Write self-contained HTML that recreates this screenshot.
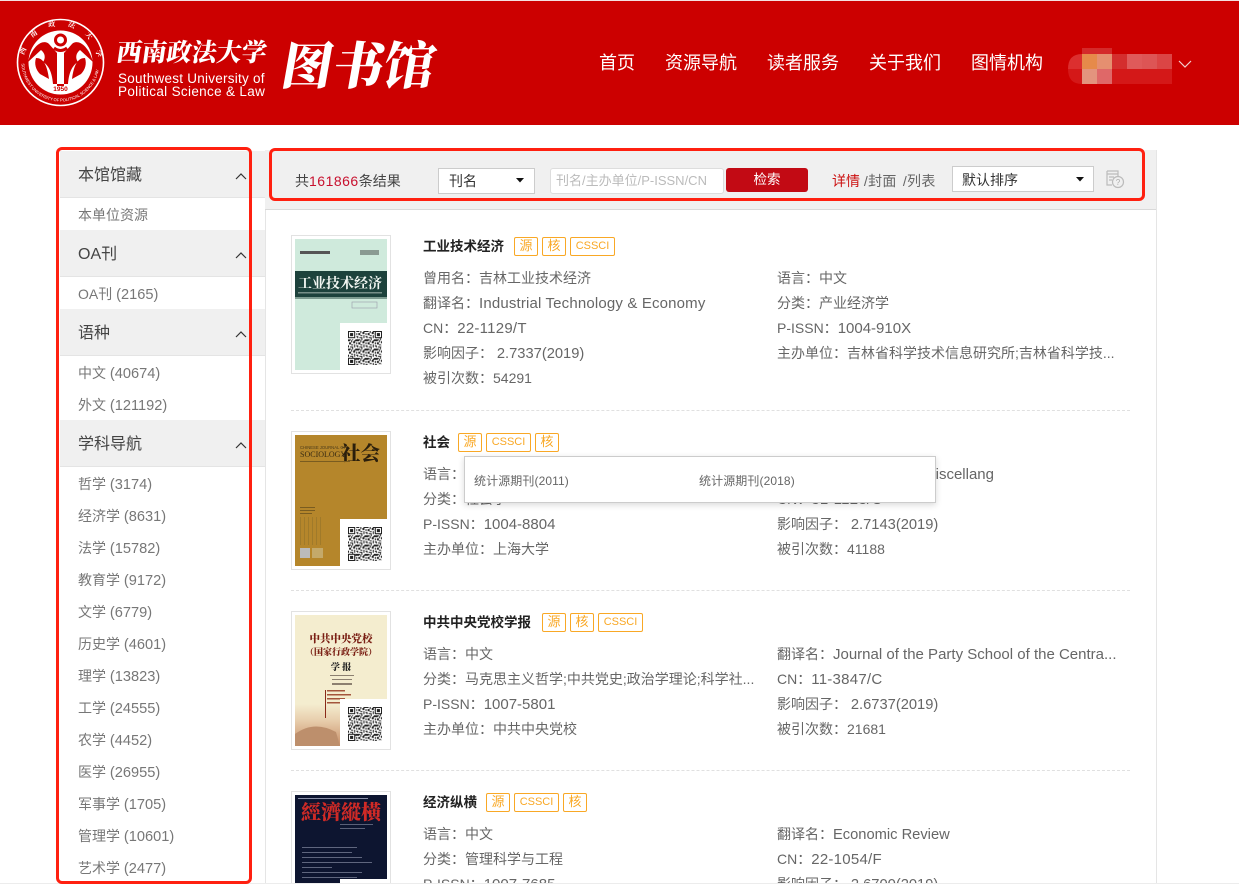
<!DOCTYPE html>
<html lang="zh-CN">
<head>
<meta charset="utf-8">
<title>图书馆</title>
<style>
html,body{margin:0;padding:0;background:#fff;width:1239px;height:885px;overflow:hidden}
#w{position:relative;width:1239px;height:885px;overflow:hidden;font-family:"Liberation Sans","Noto Sans CJK SC",sans-serif;color:#666;font-size:14px}
.t{position:absolute;height:24px;line-height:24px;white-space:nowrap}
.hd{position:absolute;left:0;top:0;width:1239px;height:125px;background:#cc0000;border-top:1px solid #f4e0e0;box-sizing:border-box}
.nav{position:absolute;top:51px;height:24px;line-height:24px;color:#fff;font-size:18px;white-space:nowrap}
.sh{position:absolute;left:60px;width:205px;height:46px;background:#f0f0f0;border-bottom:1px solid #e4e4e4}
.sh span{position:absolute;left:18px;top:13px;font-size:16px;line-height:24px;color:#444}
.sh svg{position:absolute;left:175px;top:21px}
.si{left:78px;color:#777}
.n{font-size:14.6px}
.bt{position:absolute;height:17px;line-height:16px;border:1px solid #f9a825;border-radius:2px;color:#f9a825;font-size:13px;text-align:center}
.bt.c{font-size:11px}
.ti{color:#222;font-weight:bold;font-size:13.5px;left:423px}
.l{left:423px}.r{left:777px}
.a{font-size:15px;letter-spacing:.16px}.b{font-size:15px}.d{font-size:15px;letter-spacing:.25px}.f{font-size:15px}.g{font-size:14.7px}
.cut{height:11px;overflow:hidden}
.cv{position:absolute;left:291px;width:98px;height:137px;border:1px solid #e2e2e2;background:#fff;overflow:hidden}
.cv svg{display:block;filter:blur(.3px)}
.dash{position:absolute;left:291px;width:839px;border-top:1px dashed #e0e0e0}
.box{position:absolute;border:3px solid #ff2010;border-radius:6px;box-sizing:border-box;pointer-events:none}
</style>
</head>
<body>
<div id="w">
<svg width="0" height="0" style="position:absolute">
<defs>
<pattern id="qp" width="9" height="9" patternUnits="userSpaceOnUse">
<rect width="9" height="9" fill="#fff"/>
<path d="M0 0h2v1H0zM3 0h1v2H3zM6 0h3v1H6zM1 2h2v2H1zM5 1h2v2H5zM8 2h1v2H8zM0 5h1v2H0zM3 4h2v1H3zM6 4h1v3H6zM2 6h3v1H2zM8 5h1v1H8zM0 8h3v1H0zM4 7h1v2H4zM7 8h2v1H7z" fill="#222"/>
</pattern>
<symbol id="qr" viewBox="0 0 33 33">
<rect width="33" height="33" fill="url(#qp)"/>
<rect width="8" height="8" fill="#fff"/><rect x=".5" y=".5" width="6" height="6" fill="none" stroke="#222"/><rect x="2" y="2" width="3" height="3" fill="#222"/>
<rect x="26" y="0" width="7" height="7" fill="#222"/><rect x="27" y="1" width="5" height="5" fill="#fff"/><rect x="28" y="2" width="3" height="3" fill="#222"/>
<rect x="0" y="26" width="7" height="7" fill="#222"/><rect x="1" y="27" width="5" height="5" fill="#fff"/><rect x="2" y="28" width="3" height="3" fill="#222"/>
</symbol>
</defs>
</svg>

<div class="hd"></div>
<!-- emblem -->
<svg style="position:absolute;left:16px;top:18px" width="90" height="90" viewBox="0 0 90 90">
<circle cx="44.5" cy="44.5" r="43" fill="none" stroke="#fff" stroke-width="1.6"/>
<circle cx="44.5" cy="44.5" r="32" fill="#fff"/>
<path d="M12 44 C17 26 28 21 33 26 L41 35 L41 68 H48 L48 35 L56 26 C61 21 72 26 77 44 L64 32 C60 35 59 40 62 44 C57 47 53 53 52 66 H37 C36 53 32 47 27 44 C30 40 29 35 25 32Z" fill="#cc0000"/>
<path d="M20 40 C27 40 31 46 33 61 L24 56 C20 52 18 46 20 40ZM69 40 C62 40 58 46 56 61 L65 56 C69 52 71 46 69 40Z" fill="#cc0000"/>
<circle cx="44.5" cy="22" r="5" fill="none" stroke="#cc0000" stroke-width="3"/>
<path d="M38 30 Q44.5 35 51 30" fill="none" stroke="#cc0000" stroke-width="3"/>
<text x="44.5" y="73" text-anchor="middle" font-size="6.5" font-weight="bold" fill="#cc0000" font-family="Liberation Sans">1950</text>
<path id="arcT" d="M8 44.5 A36.5 36.5 0 0 1 81 44.5" fill="none"/>
<text font-size="7" fill="#fff" font-weight="bold" font-family="Noto Serif CJK SC" letter-spacing="12"><textPath href="#arcT" startOffset="7">西南政法大学</textPath></text>
<path id="arcB" d="M5.5 44.5 A39 39 0 0 0 83.5 44.5" fill="none"/>
<text font-size="4.1" fill="#fff" font-family="Liberation Sans"><textPath href="#arcB" startOffset="1">SOUTHWEST UNIVERSITY OF POLITICAL SCIENCE &amp; LAW</textPath></text>
</svg>
<div class="t" style="left:117px;top:37px;height:28px;line-height:28px;font-family:'Noto Serif CJK SC','Liberation Serif',serif;font-weight:900;font-size:25px;color:#fff;transform:skewX(-8deg)">西南政法大学</div>
<div class="t" style="left:118px;top:72px;height:13px;line-height:13px;font-size:13.5px;letter-spacing:.25px;color:#fff">Southwest University of</div>
<div class="t" style="left:118px;top:85px;height:13px;line-height:13px;font-size:13.5px;letter-spacing:.33px;color:#fff">Political Science &amp; Law</div>
<div class="t" style="left:283px;top:34px;height:56px;line-height:56px;font-family:'Noto Serif CJK SC','Liberation Serif',serif;font-weight:900;font-size:51px;color:#fff;transform:skewX(-10deg)">图书馆</div>

<div class="nav" style="left:599px">首页</div>
<div class="nav" style="left:665px">资源导航</div>
<div class="nav" style="left:767px">读者服务</div>
<div class="nav" style="left:869px">关于我们</div>
<div class="nav" style="left:971px">图情机构</div>
<!-- pixelated avatar/name -->
<svg style="position:absolute;left:1068px;top:48px" width="125" height="38" viewBox="0 0 125 38">
<path d="M0 21 Q0 6 14 6 V21Z" fill="#dc2f2f"/>
<path d="M0 21 Q0 36 14 36 V21Z" fill="#d41818"/>
<rect x="14" y="6" width="15" height="15" fill="#e68a4a"/>
<rect x="29" y="6" width="15" height="15" fill="#e58f70"/>
<rect x="14" y="21" width="15" height="15" fill="#e3947e"/>
<rect x="29" y="21" width="15" height="15" fill="#df6868"/>
<rect x="14" y="0" width="30" height="6" fill="#d42a2a"/>
<rect x="44" y="6" width="15" height="15" fill="#d42e2e"/>
<rect x="59" y="6" width="15" height="15" fill="#df5a5a"/>
<rect x="74" y="6" width="15" height="15" fill="#dd5555"/>
<rect x="89" y="6" width="15" height="15" fill="#db4545"/>
<rect x="44" y="21" width="60" height="15" fill="#d41818"/>
<path d="M111 13 L117 19 L123 13" fill="none" stroke="#f3d0d0" stroke-width="1.2"/>
</svg>

<!-- sidebar -->
<div style="position:absolute;left:265px;top:150px;height:735px;border-left:1px solid #e5e5e5"></div>
<div class="sh" style="top:151px"><span>本馆馆藏</span><svg width="12" height="8"><path d="M1 7 L6 2 L11 7" fill="none" stroke="#333" stroke-width="1.2"/></svg></div>
<div class="t si" style="top:203px">本单位资源</div>
<div class="sh" style="top:230px"><span>OA刊</span><svg width="12" height="8"><path d="M1 7 L6 2 L11 7" fill="none" stroke="#333" stroke-width="1.2"/></svg></div>
<div class="t si" style="top:282px">OA刊 <span class="n">(2165)</span></div>
<div class="sh" style="top:309px"><span>语种</span><svg width="12" height="8"><path d="M1 7 L6 2 L11 7" fill="none" stroke="#333" stroke-width="1.2"/></svg></div>
<div class="t si" style="top:361px">中文 <span class="n">(40674)</span></div>
<div class="t si" style="top:393px">外文 <span class="n">(121192)</span></div>
<div class="sh" style="top:420px"><span>学科导航</span><svg width="12" height="8"><path d="M1 7 L6 2 L11 7" fill="none" stroke="#333" stroke-width="1.2"/></svg></div>
<div class="t si" style="top:472px">哲学 <span class="n">(3174)</span></div>
<div class="t si" style="top:504px">经济学 <span class="n">(8631)</span></div>
<div class="t si" style="top:536px">法学 <span class="n">(15782)</span></div>
<div class="t si" style="top:568px">教育学 <span class="n">(9172)</span></div>
<div class="t si" style="top:600px">文学 <span class="n">(6779)</span></div>
<div class="t si" style="top:632px">历史学 <span class="n">(4601)</span></div>
<div class="t si" style="top:664px">理学 <span class="n">(13823)</span></div>
<div class="t si" style="top:696px">工学 <span class="n">(24555)</span></div>
<div class="t si" style="top:728px">农学 <span class="n">(4452)</span></div>
<div class="t si" style="top:760px">医学 <span class="n">(26955)</span></div>
<div class="t si" style="top:792px">军事学 <span class="n">(1705)</span></div>
<div class="t si" style="top:824px">管理学 <span class="n">(10601)</span></div>
<div class="t si" style="top:856px">艺术学 <span class="n">(2477)</span></div>

<!-- main panel -->
<div style="position:absolute;left:265px;top:150px;width:892px;height:60px;background:#f0f0f0;border-bottom:1px solid #d9d9d9;box-sizing:border-box"></div>
<div style="position:absolute;left:1156px;top:150px;height:735px;border-left:1px solid #e5e5e5"></div>

<div class="t" style="left:295px;top:169px;font-size:14px;color:#444">共<span style="color:#c8102e;letter-spacing:.5px">161866</span>条结果</div>
<div style="position:absolute;left:438px;top:168px;width:97px;height:26px;background:#fff;border:1px solid #ccc;box-sizing:border-box"></div>
<div class="t" style="left:449px;top:169px;color:#333;font-size:14px">刊名</div>
<svg style="position:absolute;left:516px;top:178px" width="9" height="6"><path d="M0 0H8L4 4.5Z" fill="#111"/></svg>
<div style="position:absolute;left:550px;top:168px;width:174px;height:26px;background:#fff;border:1px solid #ddd;border-radius:3px;box-sizing:border-box"></div>
<div class="t" style="left:556px;top:169px;font-size:13px;color:#bbb">刊名/主办单位/P-ISSN/CN</div>
<div style="position:absolute;left:726px;top:168px;width:82px;height:24px;line-height:24px;background:#c20a14;border-radius:3px;color:#fff;font-size:13.5px;text-align:center">检索</div>
<div class="t" style="left:832px;top:169px;font-size:14px"><span style="color:#cc1111">详情</span> <span style="color:#666;letter-spacing:.3px;word-spacing:2px">/封面 /列表</span></div>
<div style="position:absolute;left:952px;top:166px;width:142px;height:26px;background:#fff;border:1px solid #ccc;box-sizing:border-box"></div>
<div class="t" style="left:962px;top:168px;font-size:14px;color:#333">默认排序</div>
<svg style="position:absolute;left:1076px;top:177px" width="9" height="6"><path d="M0 0H8L4 4.5Z" fill="#111"/></svg>
<svg style="position:absolute;left:1105px;top:169px" width="21" height="20" viewBox="0 0 21 20">
<path d="M2 2H13V7M2 2V16H7" fill="none" stroke="#bbb" stroke-width="1.2"/><path d="M2 5H13M4 8H9M4 11H7" stroke="#bbb" stroke-width="1.2"/>
<circle cx="13" cy="13" r="5.5" fill="#f0f0f0" stroke="#bbb" stroke-width="1.2"/>
<text x="13" y="16" text-anchor="middle" font-size="8" fill="#aaa" font-family="Liberation Sans">?</text>
</svg>

<!-- Item 1 -->
<div class="cv" style="top:235px">
<svg width="98" height="137" viewBox="0 0 98 137">
<rect x="3" y="3" width="92" height="131" fill="#cfeadc"/>
<rect x="3" y="35" width="92" height="26" fill="#1d423c"/>
<rect x="3" y="61" width="92" height="2" fill="#7d9b90"/>
<rect x="8" y="15" width="30" height="3" fill="#555"/><rect x="68" y="14" width="19" height="5" fill="#8a9a92"/>
<text x="6" y="52" font-size="14" font-weight="bold" fill="#f2f6f2" font-family="Noto Serif CJK SC">工业技术经济</text>
<rect x="6" y="56" width="84" height="1.5" fill="#778f88"/>
<rect x="60" y="66" width="25" height="6" fill="none" stroke="#99a" stroke-width=".6"/>
<rect x="48" y="87" width="47" height="47" fill="#fff"/>
<use href="#qr" x="56" y="95" width="34" height="34"/>
</svg>
</div>
<div class="t ti" style="top:235px">工业技术经济</div>
<div class="bt" style="left:514px;top:237px;width:22px">源</div>
<div class="bt" style="left:542px;top:237px;width:22px">核</div>
<div class="bt c" style="left:570px;top:237px;width:43px">CSSCI</div>
<div class="t l" style="top:266px">曾用名：吉林工业技术经济</div>
<div class="t l" style="top:291px">翻译名：<span class="a">Industrial Technology &amp; Economy</span></div>
<div class="t l" style="top:316px">CN：<span class="d">22-1129/T</span></div>
<div class="t l" style="top:341px">影响因子： <span class="g">2.7337(2019)</span></div>
<div class="t l" style="top:366px">被引次数：54291</div>
<div class="t r" style="top:266px">语言：中文</div>
<div class="t r" style="top:291px">分类：产业经济学</div>
<div class="t r" style="top:316px">P-ISSN：<span class="f">1004-910X</span></div>
<div class="t r" style="top:341px">主办单位：吉林省科学技术信息研究所;吉林省科学技...</div>
<div class="dash" style="top:410px"></div>

<!-- Item 2 -->
<div class="cv" style="top:431px">
<svg width="98" height="137" viewBox="0 0 98 137">
<rect x="3" y="3" width="92" height="131" fill="#b5862b"/>
<text x="8" y="17" font-size="4.2" fill="#4a3a1a" font-family="Liberation Sans">CHINESE JOURNAL OF</text>
<text x="8" y="25" font-size="8" fill="#3a2c12" font-family="Liberation Serif">SOCIOLOGY</text>
<text x="49" y="28" font-size="19.5" font-weight="900" fill="#2b1f0c" font-family="Noto Serif CJK SC">社会</text>
<rect x="8" y="29" width="50" height="1" fill="#7a5c20"/>
<path d="M8 75h15v1H8zM8 78h15v1H8zM8 81h12v1H8z" fill="#7a5c20"/>
<path d="M8 85h1v28h-1zM12 85h1v28h-1zM16 85h1v28h-1zM20 85h1v28h-1zM24 85h1v28h-1zM28 85h1v28h-1z" fill="#a07a2a"/>
<rect x="8" y="116" width="10" height="10" fill="#bbb"/><rect x="20" y="116" width="11" height="10" fill="#c4a96a"/>
<rect x="48" y="87" width="47" height="47" fill="#fff"/>
<use href="#qr" x="56" y="95" width="34" height="34"/>
</svg>
</div>
<div class="t ti" style="top:431px">社会</div>
<div class="bt" style="left:458px;top:433px;width:22px">源</div>
<div class="bt c" style="left:486px;top:433px;width:43px">CSSCI</div>
<div class="bt" style="left:535px;top:433px;width:22px">核</div>
<div class="t l" style="top:462px">语言：中文</div>
<div class="t l" style="top:487px">分类：社会学</div>
<div class="t l" style="top:512px">P-ISSN：<span class="f">1004-8804</span></div>
<div class="t l" style="top:537px">主办单位：上海大学</div>
<div class="t" style="right:245px;top:462px">翻译名：<span class="b">Sociology Miscellang</span></div>
<div class="t r" style="top:487px">CN：<span class="d">31-1123/C</span></div>
<div class="t r" style="top:512px">影响因子： <span class="g">2.7143(2019)</span></div>
<div class="t r" style="top:537px">被引次数：41188</div>
<div style="position:absolute;left:464px;top:456px;width:472px;height:47px;background:#fff;border:1px solid #ccc;box-sizing:border-box;box-shadow:0 2px 6px rgba(0,0,0,.15)"></div>
<div class="t" style="left:474px;top:469px;font-size:12px;letter-spacing:.1px">统计源期刊(2011)</div>
<div class="t" style="left:699px;top:469px;font-size:12px;letter-spacing:.1px">统计源期刊(2018)</div>
<div class="dash" style="top:590px"></div>

<!-- Item 3 -->
<div class="cv" style="top:611px">
<svg width="98" height="137" viewBox="0 0 98 137">
<defs><linearGradient id="g3" x1="0" y1="0" x2="0" y2="1"><stop offset=".68" stop-color="#f4edcf"/><stop offset=".8" stop-color="#e8cfae"/><stop offset="1" stop-color="#c88f68"/></linearGradient></defs>
<rect x="3" y="3" width="92" height="131" fill="url(#g3)"/>
<text x="49" y="30" text-anchor="middle" font-size="10.5" font-weight="900" fill="#7a1f14" font-family="Noto Serif CJK SC">中共中央党校</text>
<text x="49" y="43" text-anchor="middle" font-size="9" font-weight="900" fill="#7a1f14" font-family="Noto Serif CJK SC">（国家行政学院）</text>
<text x="49" y="58" text-anchor="middle" font-size="9" font-weight="900" fill="#222" font-family="Noto Serif CJK SC">学 报</text>
<path d="M38 63h24v1H38zM40 67h20v1H40zM40 71h20v2H40z" fill="#8c8070"/>
<path d="M33 78h1v28h-1z" fill="#8a2a1a"/>
<path d="M35 78h18v1.5H35zM35 82h24v1.5H35zM35 86h18v1.5H35zM35 90h14v1.5H35z" fill="#a4553c"/>
<path d="M3 122 Q22 108 44 120 L48 134 H3Z" fill="#bd8f6c"/>
<rect x="48" y="87" width="47" height="47" fill="#fff"/>
<use href="#qr" x="56" y="95" width="34" height="34"/>
</svg>
</div>
<div class="t ti" style="top:611px">中共中央党校学报</div>
<div class="bt" style="left:542px;top:613px;width:22px">源</div>
<div class="bt" style="left:570px;top:613px;width:22px">核</div>
<div class="bt c" style="left:598px;top:613px;width:43px">CSSCI</div>
<div class="t l" style="top:642px">语言：中文</div>
<div class="t l" style="top:667px">分类：马克思主义哲学;中共党史;政治学理论;科学社...</div>
<div class="t l" style="top:692px">P-ISSN：<span class="f">1007-5801</span></div>
<div class="t l" style="top:717px">主办单位：中共中央党校</div>
<div class="t r" style="top:642px">翻译名：<span class="b">Journal of the Party School of the Centra...</span></div>
<div class="t r" style="top:667px">CN：<span class="d">11-3847/C</span></div>
<div class="t r" style="top:692px">影响因子： <span class="g">2.6737(2019)</span></div>
<div class="t r" style="top:717px">被引次数：21681</div>
<div class="dash" style="top:770px"></div>

<!-- Item 4 -->
<div class="cv" style="top:791px;height:91px;border-bottom:0">
<svg width="98" height="91" viewBox="0 0 98 91">
<rect x="3" y="3" width="92" height="88" fill="#0d1530"/>
<path d="M6 6h70v1H6z" fill="#8a90a8"/>
<text x="49" y="27" text-anchor="middle" font-size="20" font-weight="900" fill="#cf2a26" font-family="Noto Serif CJK SC">經濟縱橫</text>
<path d="M48 32h33v1H48zM48 36h25v1H48z" fill="#5a6078"/>
<path d="M10 55h55v1H10zM10 60h50v1H10zM10 65h60v1H10zM10 70h70v1H10zM10 75h30v1H10zM10 80h60v1H10zM10 85h55v1H10z" fill="#7b8198" opacity=".75"/>
<rect x="48" y="87" width="47" height="4" fill="#fff"/>
</svg>
</div>
<div class="t ti" style="top:791px">经济纵横</div>
<div class="bt" style="left:486px;top:793px;width:22px">源</div>
<div class="bt c" style="left:514px;top:793px;width:43px">CSSCI</div>
<div class="bt" style="left:563px;top:793px;width:22px">核</div>
<div class="t l" style="top:822px">语言：中文</div>
<div class="t l" style="top:847px">分类：管理科学与工程</div>
<div class="t l cut" style="top:872px">P-ISSN：<span class="f">1007-7685</span></div>
<div class="t r" style="top:822px">翻译名：<span class="g">Economic Review</span></div>
<div class="t r" style="top:847px">CN：<span class="d">22-1054/F</span></div>
<div class="t r cut" style="top:872px">影响因子： <span class="g">2.6700(2019)</span></div>

<div style="position:absolute;left:0;top:883px;width:1239px;height:2px;background:#fff;border-top:1px solid #ececec;box-sizing:border-box"></div>

<!-- red annotation boxes -->
<div class="box" style="left:56px;top:147px;width:196px;height:737px"></div>
<div class="box" style="left:269px;top:148px;width:876px;height:53px"></div>
</div>
</body>
</html>
